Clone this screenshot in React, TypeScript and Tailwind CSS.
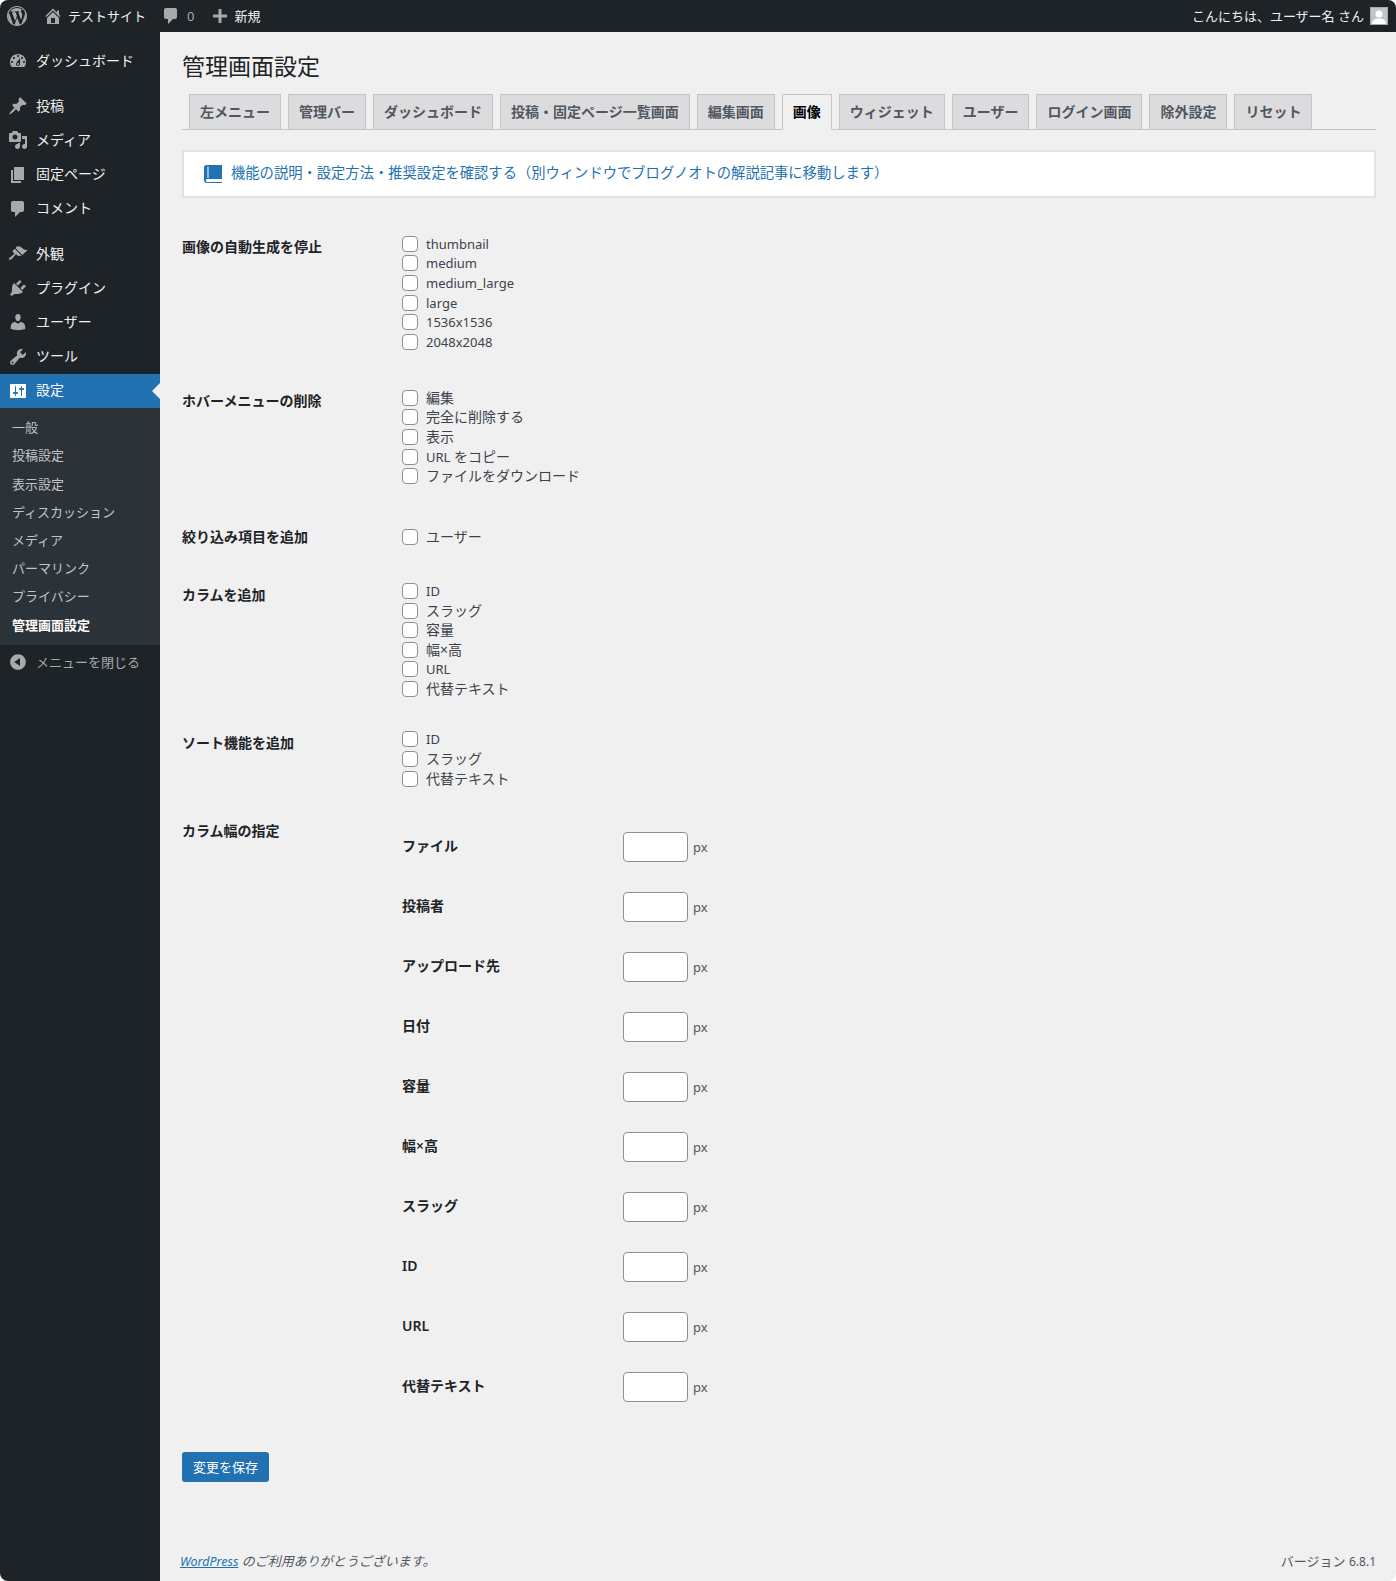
import React from 'react';

const FONT = "font-['Noto_Sans','Noto_Sans_CJK_JP',sans-serif]";

const icons = {
  wp: 'M20 10c0-5.52-4.48-10-10-10S0 4.48 0 10s4.48 10 10 10 10-4.48 10-10zM10 1.01c4.96 0 8.99 4.03 8.99 8.99s-4.03 8.99-8.99 8.99S1.01 14.96 1.01 10 5.04 1.01 10 1.01zM8.01 14.82L4.96 6.61c.49-.03 1.05-.08 1.05-.08.43-.05.38-1.01-.06-.99 0 0-1.29.1-2.13.1-.15 0-.33 0-.52-.01 1.44-2.17 3.9-3.6 6.7-3.6 2.09 0 3.99.79 5.41 2.09-.6-.1-1.45.35-1.45 1.38 0 .64.38 1.18.78 1.82.3.53.47 1.18.47 2.13 0 1.29-1.21 4.3-1.21 4.3l-2.62-7.24c.47-.02.71-.15.71-.15.43-.04.38-1.08-.05-1.05 0 0-1.25.1-2.07.1-.76 0-2.03-.1-2.03-.1-.43-.03-.48 1.01-.05 1.05 0 0 .39.05.81.07l1.2 3.3-1.7 5.09zM17.41 10c.24-.64.74-1.87.43-4.25.7 1.29 1.05 2.71 1.05 4.25 0 3.29-1.73 6.24-4.4 7.78.97-2.59 1.94-5.2 2.92-7.78zM6.1 18.09C3.12 16.65 1.11 13.53 1.11 10c0-1.3.23-2.48.72-3.59C3.25 10.3 4.67 14.2 6.1 18.09zm4.03-6.63l2.58 6.98c-.86.29-1.76.45-2.71.45-.79 0-1.57-.11-2.29-.33.81-2.38 1.62-4.74 2.42-7.1z',
  home: 'M16 8.5l1.53 1.53-1.06 1.06L10 4.62l-6.47 6.47-1.06-1.06L10 2.5l4 4v-2h2v4zm-6-2.46l6 5.99V18H4v-5.97zM12 17v-5H8v5h4z',
  comment: 'M5 2h9c1.1 0 2 .9 2 2v7c0 1.1-.9 2-2 2h-2l-5 5v-5H5c-1.1 0-2-.9-2-2V4c0-1.1.9-2 2-2z',
  plus: 'M17 8.5v3h-5.5V17h-3v-5.5H3v-3h5.5V3h3v5.5H17z',
  dashboard: 'M3.76 16h12.48c1.1-1.37 1.76-3.11 1.76-5 0-4.42-3.58-8-8-8s-8 3.58-8 8c0 1.89.66 3.63 1.76 5zM10 4c.55 0 1 .45 1 1s-.45 1-1 1-1-.45-1-1 .45-1 1-1zM6 6c.55 0 1 .45 1 1s-.45 1-1 1-1-.45-1-1 .45-1 1-1zm8 0c.55 0 1 .45 1 1s-.45 1-1 1-1-.45-1-1 .45-1 1-1zm-5.37 5.55L12 7v6c0 1.1-.9 2-2 2s-2-.9-2-2c0-.57.24-1.08.63-1.45zM4 10c.55 0 1 .45 1 1s-.45 1-1 1-1-.45-1-1 .45-1 1-1zm12 0c.55 0 1 .45 1 1s-.45 1-1 1-1-.45-1-1 .45-1 1-1zm-5 3c0-.55-.45-1-1-1s-1 .45-1 1 .45 1 1 1 1-.45 1-1z',
  post: 'M10.44 3.02l1.82-1.82 6.36 6.35-1.83 1.82c-1.05-.68-2.48-.57-3.41.36l-.75.75c-.92.93-1.04 2.35-.35 3.41l-1.83 1.82-2.41-2.41-2.8 2.79c-.42.42-3.38 2.71-3.8 2.29s1.86-3.39 2.28-3.81l2.79-2.79L4.1 9.36l1.83-1.82c1.05.69 2.48.57 3.4-.36l.75-.75c.93-.92 1.05-2.35.36-3.41z',
  media: 'M13 11V4c0-.55-.45-1-1-1h-1.67L9 1H5L3.67 3H2c-.55 0-1 .45-1 1v7c0 .55.45 1 1 1h10c.55 0 1-.45 1-1zM7 4.5c1.38 0 2.5 1.12 2.5 2.5S8.38 9.5 7 9.5 4.5 8.38 4.5 7 5.62 4.5 7 4.5zM14 6h5v10.5c0 1.38-1.12 2.5-2.5 2.5S14 17.88 14 16.5s1.12-2.5 2.5-2.5c.17 0 .34.02.5.05V9h-3V6zm-4 8.05V13h2v3.5c0 1.38-1.12 2.5-2.5 2.5S7 17.88 7 16.5 8.12 14 9.5 14c.17 0 .34.02.5.05z',
  page: 'M6 15V2h10v13H6zm-1 1h8v2H3V5h2v11z',
  appearance: 'M14.48 11.06L7.41 3.99l1.5-1.5c.5-.56 2.3-.47 3.51.32 1.21.8 1.43 1.28 2.91 2.1 1.18.64 2.45 1.26 4.45.85zm-.71.71L6.7 4.7 4.93 6.47c-.39.39-.39 1.02 0 1.41l1.06 1.06c.39.39.39 1.03 0 1.42-.6.6-1.43 1.11-2.21 1.69-.35.26-.7.53-1.01.84C1.43 13.23.4 14.85 1.13 15.58c.73.73 2.35-.3 3.69-1.64.31-.31.58-.66.84-1.01.58-.78 1.09-1.61 1.69-2.21.39-.39 1.02-.39 1.41 0l1.06 1.06c.39.39 1.02.39 1.41 0z',
  plugins: 'M13.11 4.36L9.87 7.6 8 5.73l3.24-3.24c.35-.34 1.05-.2 1.56.32.52.51.66 1.21.31 1.55zm-8 1.77l.91-1.12 9.01 9.01-1.19.84c-.71.71-2.63 1.16-3.82 1.16H6.14L4.9 17.26c-.59.59-1.54.59-2.12 0-.59-.58-.59-1.53 0-2.12l1.24-1.24v-3.88c0-1.13.4-3.19 1.09-3.89zm7.26 3.97l3.24-3.24c.34-.35 1.04-.21 1.55.31.52.51.66 1.21.31 1.55l-3.24 3.25z',
  users: 'M10 9.25c-2.27 0-2.73-3.44-2.73-3.44C7 4.02 7.82 2 9.97 2c2.16 0 2.98 2.02 2.71 3.81 0 0-.41 3.44-2.68 3.44zm0 2.57L12.72 10c2.39 0 4.52 2.33 4.52 4.53v2.49s-3.65 1.13-7.24 1.13c-3.65 0-7.24-1.13-7.24-1.13v-2.49c0-2.25 1.94-4.48 4.47-4.48z',
  tools: 'M16.68 9.77c-1.34 1.34-3.3 1.67-4.95.99l-5.41 6.52c-.99.99-2.59.99-3.58 0s-.99-2.59 0-3.57l6.52-5.42c-.68-1.65-.35-3.61.99-4.95 1.28-1.28 3.12-1.62 4.72-1.06l-2.89 2.89 2.82 2.82 2.86-2.87c.53 1.58.18 3.39-1.08 4.65zM3.81 16.21c.4.39 1.04.39 1.43 0 .4-.4.4-1.04 0-1.43-.39-.4-1.03-.4-1.43 0-.39.39-.39 1.03 0 1.43z',
  settings: 'M18 16V4c0-.55-.45-1-1-1H3c-.55 0-1 .45-1 1v12c0 .55.45 1 1 1h14c.55 0 1-.45 1-1zM8 11h1c.55 0 1 .45 1 1s-.45 1-1 1H8v1.5c0 .28-.22.5-.5.5s-.5-.22-.5-.5V13H6c-.55 0-1-.45-1-1s.45-1 1-1h1V5.5c0-.28.22-.5.5-.5s.5.22.5.5V11zm5-2h-1c-.55 0-1-.45-1-1s.45-1 1-1h1V5.5c0-.28.22-.5.5-.5s.5.22.5.5V7h1c.55 0 1 .45 1 1s-.45 1-1 1h-1v5.5c0 .28-.22.5-.5.5s-.5-.22-.5-.5V9z',
  collapse: 'M10 2.16c4.33 0 7.84 3.51 7.84 7.84s-3.51 7.84-7.84 7.84S2.16 14.33 2.16 10 5.71 2.16 10 2.16zm2 11.72V6.12L6.18 9.97z',
};

const Dash: React.FC<{ name: keyof typeof icons; className?: string }> = ({ name, className }) => (
  <svg viewBox="0 0 20 20" className={className} fill="currentColor" fillRule="evenodd">
    <path d={icons[name]} />
  </svg>
);

const MenuItem: React.FC<{ icon: keyof typeof icons; label: string; current?: boolean }> = ({ icon, label, current }) => (
  <li className={`relative flex h-[34.2px] items-center text-sm ${current ? 'bg-[#2271b1] text-white' : 'text-[#f0f0f1]'}`}>
    <Dash name={icon} className={`ml-[8px] mr-[8px] h-[20px] w-[20px] ${current ? 'text-white' : 'text-[#a7aaad]'}`} />
    <span className="pb-[1px]">{label}</span>
    {current && <span className="absolute right-0 top-1/2 -mt-[8px] border-y-[8px] border-r-[8px] border-y-transparent border-r-[#f0f0f1]" />}
  </li>
);

const submenu = ['一般', '投稿設定', '表示設定', 'ディスカッション', 'メディア', 'パーマリンク', 'プライバシー'];
const tabs = ['左メニュー', '管理バー', 'ダッシュボード', '投稿・固定ページ一覧画面', '編集画面', '画像', 'ウィジェット', 'ユーザー', 'ログイン画面', '除外設定', 'リセット'];

const Sidebar: React.FC = () => (
  <aside className="w-[160px] shrink-0 bg-[#1d2327]">
    <ul className="pt-[12px]">
      <MenuItem icon="dashboard" label="ダッシュボード" />
      <li className="h-[11px]" />
      <MenuItem icon="post" label="投稿" />
      <MenuItem icon="media" label="メディア" />
      <MenuItem icon="page" label="固定ページ" />
      <MenuItem icon="comment" label="コメント" />
      <li className="h-[11px]" />
      <MenuItem icon="appearance" label="外観" />
      <MenuItem icon="plugins" label="プラグイン" />
      <MenuItem icon="users" label="ユーザー" />
      <MenuItem icon="tools" label="ツール" />
      <MenuItem icon="settings" label="設定" current />
    </ul>
    <ul className="bg-[#2c3338] py-[6px] text-[13px] text-[#c3c4c7]">
      {submenu.map((s) => (
        <li key={s} className="flex h-[28.2px] items-center pb-[1px] pl-[12px]">{s}</li>
      ))}
      <li className="flex h-[28.2px] items-center pb-[1px] pl-[12px] font-semibold text-white">管理画面設定</li>
    </ul>
    <div className="flex h-[36px] items-center pb-[2px] text-[13px] text-[#a7aaad]">
      <Dash name="collapse" className="ml-[8px] mr-[8px] h-[20px] w-[20px]" />
      <span>メニューを閉じる</span>
    </div>
  </aside>
);

const AdminBar: React.FC = () => (
  <header className="flex h-[32px] shrink-0 items-center bg-[#1d2327] text-[13px] text-[#f0f0f1]">
    <Dash name="wp" className="ml-[7px] h-[20px] w-[20px] text-[#a7aaad]" />
    <Dash name="home" className="ml-[16px] h-[20px] w-[20px] text-[#a7aaad]" />
    <span className="ml-[5px]">テストサイト</span>
    <Dash name="comment" className="ml-[15px] h-[20px] w-[20px] text-[#a7aaad]" />
    <span className="ml-[6px] text-[#a7aaad]">0</span>
    <Dash name="plus" className="ml-[16px] h-[20px] w-[20px] text-[#a7aaad]" />
    <span className="ml-[4px]">新規</span>
    <span className="ml-auto">こんにちは、ユーザー名 さん</span>
    <span className="ml-[6px] mr-[8px] flex h-[18px] w-[18px] items-end justify-center overflow-hidden border border-[#a7aaad] bg-[#c3c4c7]">
      <svg viewBox="0 0 16 16" className="h-[16px] w-[16px]" fill="#fff"><circle cx="8" cy="6" r="3.5" /><path d="M1 16c0-4 3-5.5 7-5.5s7 1.500 7 5.500z" /></svg>
    </span>
  </header>
);

// Noto Sans at 13px sits closest to the reference's latin glyphs, which run narrower than its 14px
const Latin: React.FC<{ children: React.ReactNode }> = ({ children }) => <span className="text-[13px]">{children}</span>;

const Checks: React.FC<{ items: React.ReactNode[] }> = ({ items }) => (
  <div className="flex flex-col">
    {items.map((t, i) => (
      <label key={i} className="flex h-[19.6px] items-center">
        <span className="h-[16px] w-[16px] rounded-[4px] border border-[#8c8f94] bg-white" />
        <span className="ml-[8px] text-[#3c434a]">{t}</span>
      </label>
    ))}
  </div>
);

const Section: React.FC<{ title: string; items: React.ReactNode[]; className: string; labelClass: string }> = ({ title, items, className, labelClass }) => (
  <section className={`flex ${className}`}>
    <h2 className={`w-[220px] shrink-0 font-semibold text-[#1d2327] ${labelClass}`}>{title}</h2>
    <Checks items={items} />
  </section>
);

const widths = ['ファイル', '投稿者', 'アップロード先', '日付', '容量', '幅×高', 'スラッグ', 'ID', 'URL', '代替テキスト'];

export default function App() {
  return (
    <div className={`flex h-[1581px] w-[1396px] flex-col overflow-hidden rounded-[8px] bg-[#f0f0f1] text-sm ${FONT}`}>
      <AdminBar />
      <div className="flex min-h-0 flex-1">
        <Sidebar />
        <main className="relative flex min-w-0 flex-1 flex-col pl-[22px] pr-[20px]">
          <h1 className="mt-[18px] h-[32px] text-[23px] leading-[32px] text-[#1d2327]">管理画面設定</h1>
          <nav className="mt-[12px] flex h-[36px] border-b border-[#c3c4c7]">
            {tabs.map((t) => (
              <span
                key={t}
                className={`ml-[7px] h-[36px] border border-[#c3c4c7] px-[10px] py-[5px] font-semibold leading-[24px] ${t === '画像' ? 'border-b-[#f0f0f1] bg-[#f0f0f1] text-black' : 'bg-[#dcdcde] text-[#50575e]'}`}
              >
                {t}
              </span>
            ))}
          </nav>

          <div className="mt-[20px] flex h-[48px] items-center border-2 border-[#e2e2e3] bg-white pb-[2px] pl-[20px] text-[#2271b1]">
            <svg viewBox="0 0 18 18" className="mt-[2px] h-[18px] w-[18px]">
              <path fill="#2271b1" d="M2.500 0H18v14H3.500C2.700 14 2 14.500 2 15.500S2.700 17 3.500 17H18v1H3C1.300 18 0 16.800 0 15V2.500C0 1 1 0 2.500 0z" />
              <path fill="#fff" d="M3.500 1.500h1V13h-1z" />
            </svg>
            <a className="ml-[9px] text-[14.3px]">機能の説明・設定方法・推奨設定を確認する（別ウィンドウでブログノオトの解説記事に移動します）</a>
          </div>

          <Section className="mt-[36px]" labelClass="mt-[2.5px]" title="画像の自動生成を停止" items={[<Latin>thumbnail</Latin>, <Latin>medium</Latin>, <Latin>medium_large</Latin>, <Latin>large</Latin>, <Latin>1536x1536</Latin>, <Latin>2048x2048</Latin>]} />
          <Section className="mt-[36.5px]" labelClass="mt-[3px]" title="ホバーメニューの削除" items={['編集', '完全に削除する', '表示', <><Latin>URL</Latin> をコピー</>, 'ファイルをダウンロード']} />
          <Section className="mt-[41.5px]" labelClass="-mt-[1px]" title="絞り込み項目を追加" items={['ユーザー']} />
          <Section className="mt-[34px]" labelClass="mt-[3.5px]" title="カラムを追加" items={[<Latin>ID</Latin>, 'スラッグ', '容量', '幅×高', <Latin>URL</Latin>, '代替テキスト']} />
          <Section className="mt-[31px]" labelClass="mt-[3.5px]" title="ソート機能を追加" items={[<Latin>ID</Latin>, 'スラッグ', '代替テキスト']} />

          <section className="mt-[28.5px] flex">
            <h2 className="mt-[4px] w-[220px] shrink-0 font-semibold text-[#1d2327]">カラム幅の指定</h2>
            <div className="flex flex-col">
              {widths.map((t) => (
                <div key={t} className="flex h-[60px] items-center">
                  <span className="w-[221px] shrink-0 pb-[2px] font-semibold text-[#1d2327]">{t}</span>
                  <span className="h-[30px] w-[65px] rounded-[4px] border border-[#8c8f94] bg-white" />
                  <span className="ml-[5px] text-[13px] text-[#50575e]">px</span>
                </div>
              ))}
            </div>
          </section>

          <button className="mt-[35px] h-[30px] w-[87px] rounded-[3px] bg-[#2271b1] text-[13px] text-white">変更を保存</button>

          <footer className="mb-[10px] mt-auto flex h-[20px] items-center justify-between text-[13px] text-[#50575e]">
            <span className="-ml-[2px] italic">
              <a className="text-[12.5px] text-[#2271b1] underline">WordPress</a> のご利用ありがとうございます。
            </span>
            <span>バージョン <span className="text-[12px]">6.8.1</span></span>
          </footer>
        </main>
      </div>
    </div>
  );
}
